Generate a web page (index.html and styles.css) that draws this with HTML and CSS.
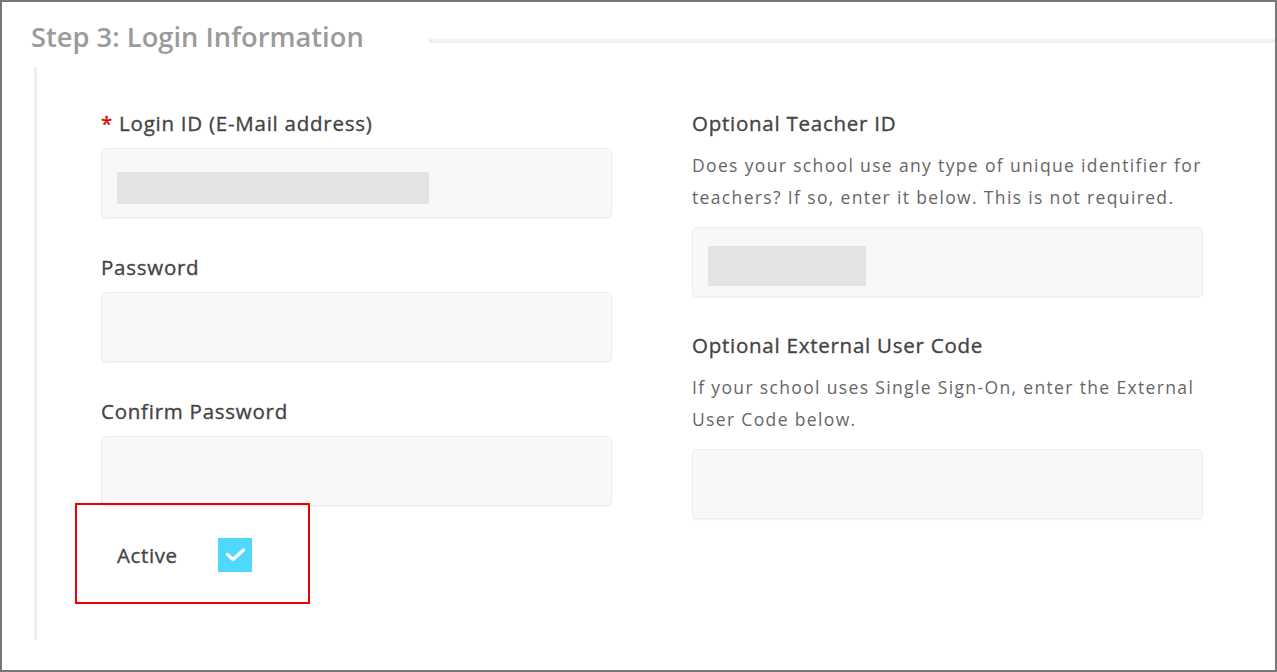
FILE: index.html
```html
<!DOCTYPE html>
<html lang="en">
<head>
<meta charset="UTF-8">
<meta name="viewport" content="width=device-width, initial-scale=1.0">
<title>Step 3: Login Information</title>
<link rel="stylesheet" href="styles.css">
</head>
<body>
<div class="frame">
    <div class="section-head">
        <h2 class="section-title">Step 3: Login Information</h2>
        <div class="section-rule"></div>
    </div>
    <div class="section-body">
        <!-- Left column -->
        <div class="column">
            <div class="field">
                <label class="field-label"><span class="required">*</span> Login ID (E-Mail address)</label>
                <div class="field-input"><span class="blur-value wide"></span></div>
            </div>
            <div class="field">
                <label class="field-label">Password</label>
                <div class="field-input"></div>
            </div>
            <div class="field">
                <label class="field-label">Confirm Password</label>
                <div class="field-input"></div>
            </div>
            <div class="active-row">
                <span class="active-label">Active</span>
                <span class="checkbox">
                    <svg width="34" height="34" viewBox="0 0 34 34">
                        <path d="M9.5 16.5 L15 21.5 L25.5 12" fill="none" stroke="#fff" stroke-width="3.4" stroke-linecap="round" stroke-linejoin="round"/>
                    </svg>
                </span>
                <div class="highlight"></div>
            </div>
        </div>
        <!-- Right column -->
        <div class="column right">
            <div class="field">
                <label class="field-label">Optional Teacher ID</label>
                <p class="field-help">Does your school use any type of unique identifier for<br>teachers? If so, enter it below. This is not required.</p>
                <div class="field-input"><span class="blur-value short"></span></div>
            </div>
            <div class="field">
                <label class="field-label">Optional External User Code</label>
                <p class="field-help">If your school uses Single Sign-On, enter the External<br>User Code below.</p>
                <div class="field-input"></div>
            </div>
        </div>
    </div>
</div>
</body>
</html>
```

FILE: styles.css
```css
body {
    margin: 0;
    font-family: "Open Sans", Arial, sans-serif;
    background-color: #fff;
}
.frame {
    width: 1277px;
    height: 672px;
    box-sizing: border-box;
    border: 2px solid #777;
    overflow: hidden;
}
.section-head {
    display: flex;
    align-items: flex-start;
    padding: 17px 0 0 29px;
}
.section-title {
    margin: 0;
    font-size: 27.3px;
    line-height: 36px;
    font-weight: 600;
    color: #9b9b9b;
}
.section-rule {
    flex: 1;
    height: 4px;
    margin: 20px 0 0 65px;
    background-color: #f0f0f0;
}
.section-body {
    display: grid;
    grid-template-columns: 511px 511px;
    column-gap: 80px;
    margin: 12px 0 0 32px;
    height: 573px;
    box-sizing: border-box;
    border-left: 3px solid #eeeeee;
    padding: 41px 0 0 64px;
}
.column {
    display: flex;
    flex-direction: column;
    gap: 34px;
}
.column.right {
    gap: 33px;
}
.field {
    display: flex;
    flex-direction: column;
}
.field-label {
    font-size: 20.5px;
    line-height: 30px;
    letter-spacing: 0.75px;
    color: #444;
    -webkit-text-stroke: 0.35px #444;
    margin-bottom: 10px;
}
.right .field-label {
    margin-bottom: 11px;
}
.required {
    color: #e30000;
    -webkit-text-stroke: 0.35px #e30000;
}
.field-help {
    margin: 0 0 14px 0;
    font-size: 17.5px;
    line-height: 32px;
    color: #666;
    letter-spacing: 1.35px;
    white-space: nowrap;
}
.field-input {
    height: 70px;
    box-sizing: border-box;
    background-color: #f8f8f8;
    border: 1px solid #eeeeee;
    border-radius: 5px;
    box-shadow: 0 1px 2px rgba(0, 0, 0, 0.05);
    position: relative;
}
.blur-value {
    position: absolute;
    background-color: #e3e3e3;
}
.blur-value.wide {
    left: 15px;
    top: 23px;
    width: 312px;
    height: 32px;
}
.blur-value.short {
    left: 15px;
    top: 18px;
    width: 158px;
    height: 40px;
}
.active-row {
    position: relative;
    display: flex;
    align-items: center;
    height: 34px;
    margin-top: -2px;
    padding-left: 16px;
}
.active-label {
    width: 101px;
    font-size: 20.5px;
    line-height: 30px;
    letter-spacing: 0.6px;
    color: #444;
    -webkit-text-stroke: 0.35px #444;
}
.checkbox {
    width: 34px;
    height: 34px;
    background-color: #4fd7fc;
    display: block;
}
.checkbox svg {
    display: block;
}
.highlight {
    position: absolute;
    left: -26px;
    top: -35px;
    width: 235px;
    height: 101px;
    box-sizing: border-box;
    border: 2px solid #ee0000;
}
```
